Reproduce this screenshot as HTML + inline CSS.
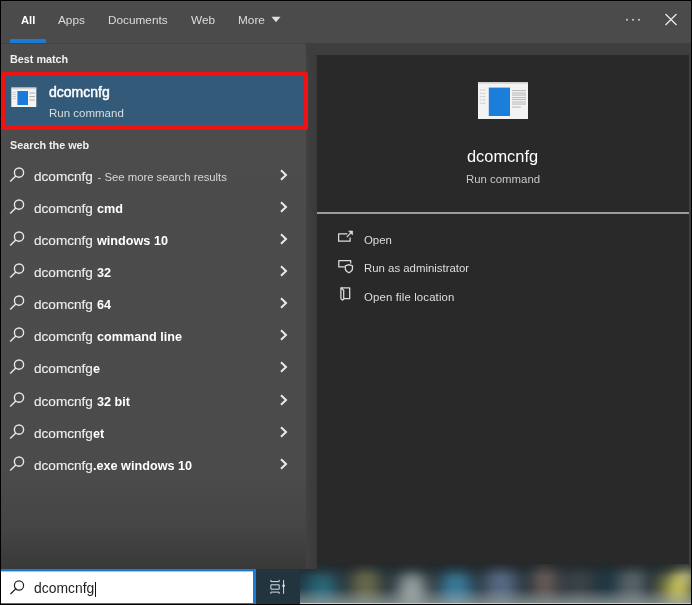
<!DOCTYPE html>
<html><head><meta charset="utf-8">
<style>
*{margin:0;padding:0;box-sizing:border-box}
html,body{width:692px;height:605px;overflow:hidden;background:#000}
body{position:relative;font-family:"Liberation Sans",sans-serif;color:#fff}
.a{position:absolute;white-space:nowrap;will-change:transform}
#top{left:1px;top:1px;width:690px;height:42px;background:#4b4b4b}
#left{left:1px;top:43px;width:305px;height:526px;background:linear-gradient(#4c4c4c,#4b4b4b 82%,#454545 92%,#39393a)}
#strip{left:306px;top:43px;width:385px;height:521px;background:#3e3e3e}
#vstrip{left:306px;top:55px;width:11px;height:514px;background:linear-gradient(90deg,#414141,#3d3d3d 5px,#3a3a3a)}
#pane{left:317px;top:55px;width:372px;height:509px;background:#292929}
.tab{top:13px;font-size:11.8px;color:#dcdcdc;line-height:14px}
.item{left:0;width:305px;height:32px}
.item .t{left:34px;top:9.5px;font-size:13.6px;line-height:16px;color:#f0f0f0;-webkit-text-stroke:0.1px #f0f0f0}
.item b{font-weight:700;color:#fff;-webkit-text-stroke:0;display:inline-block;transform:scaleX(0.93);transform-origin:0 0}
.see{font-size:11.3px;color:#d6d6d6;-webkit-text-stroke:0;padding-left:1.5px;position:relative;top:-0.5px}
.sr{position:absolute;left:8px;top:8px;fill:none;stroke:#e8e8e8;stroke-width:1.4}
.ch{position:absolute;left:278px;top:9px;fill:none;stroke:#eaeaea;stroke-width:2}
.act{left:363.5px;font-size:11.4px;color:#dedede;line-height:14px}
</style></head><body>
<div class="a" style="left:256px;top:564px;width:435px;height:40px;background:#263238;overflow:hidden">
 <svg width="435" height="40" style="position:absolute;left:0;top:0"><defs><filter id="bl" x="-50%" y="-50%" width="200%" height="200%"><feGaussianBlur stdDeviation="8 7"/></filter></defs><rect x="-20" y="-20" width="480" height="80" fill="#26333a"/><g filter="url(#bl)"><ellipse cx="47" cy="21" rx="6" ry="20" fill="#1a3a48"/><ellipse cx="67" cy="26" rx="14" ry="18" fill="#2a6a7c"/><ellipse cx="110" cy="22" rx="14" ry="20" fill="#6a6c4c"/><ellipse cx="156" cy="26" rx="14" ry="18" fill="#9aa4a2"/><ellipse cx="200" cy="26" rx="16" ry="20" fill="#3b7c9c"/><ellipse cx="245" cy="22" rx="16" ry="20" fill="#566a84"/><ellipse cx="289" cy="18" rx="12" ry="20" fill="#6a5c58"/><ellipse cx="323" cy="22" rx="12" ry="20" fill="#3e4448"/><ellipse cx="354" cy="20" rx="12" ry="20" fill="#1e3842"/><ellipse cx="377" cy="22" rx="12" ry="20" fill="#5c676e"/><ellipse cx="392" cy="22" rx="6" ry="20" fill="#263238"/><ellipse cx="422" cy="26" rx="14" ry="20" fill="#c4bc50"/><ellipse cx="432" cy="10" rx="6" ry="10" fill="#e0dca0"/></g></svg><div style="position:absolute;left:0;top:0;width:435px;height:40px;background:linear-gradient(rgba(30,30,30,0.5),rgba(30,30,30,0) 30%,rgba(160,170,170,0) 60%,rgba(170,178,178,0.6) 96%)"></div><div style="position:absolute;left:0;top:39px;width:435px;height:1px;background:#c4caca"></div>
</div>
<div class="a" id="top"></div>
<div class="a" id="left"></div>
<div class="a" style="left:1px;top:43px;width:305px;height:1px;background:#444"></div>
<div class="a" id="strip"></div>
<div class="a" id="vstrip"></div>
<div class="a" id="pane"></div>

<div class="a tab" style="left:21px;font-weight:700;color:#fff;font-size:11.2px">All</div>
<div class="a tab" style="left:58px">Apps</div>
<div class="a tab" style="left:108px">Documents</div>
<div class="a tab" style="left:191px">Web</div>
<div class="a tab" style="left:238px">More</div>
<svg class="a" style="left:271px;top:16px" width="10" height="7"><path d="M0.5 0.8 L9.5 0.8 L5 6.2 Z" fill="#e0e0e0"/></svg>
<div class="a" style="left:10px;top:39px;width:36px;height:4px;background:#1a7ad4"></div>
<svg class="a" style="left:620px;top:12px" width="60" height="18">
 <circle cx="7" cy="7.7" r="0.95" fill="#d8d8d8"/><circle cx="13" cy="7.7" r="0.95" fill="#d8d8d8"/><circle cx="19" cy="7.7" r="0.95" fill="#d8d8d8"/>
 <path d="M45.5 2 L56.5 13 M56.5 2 L45.5 13" stroke="#e8e8e8" stroke-width="1.3"/>
</svg>

<div class="a" style="left:10px;top:53px;font-size:10.8px;font-weight:700;color:#f0f0f0;line-height:13px">Best match</div>
<div class="a" style="left:1px;top:72px;width:307px;height:58px;border:4px solid #f01212;border-radius:2px;background:#345a7a"></div>
<svg class="a" style="left:11px;top:87px" width="26" height="21">
 <rect x="0.3" y="0.6" width="25" height="19.4" fill="#f4f4f4"/>
 <rect x="0.3" y="0.6" width="25" height="1.6" fill="#d4d4d4"/>
 <rect x="6.4" y="4" width="10.6" height="14" fill="#1a7cda"/>
 <rect x="18.3" y="5.5" width="5.6" height="1.1" fill="#b4b4b4"/>
 <rect x="18.3" y="9" width="5.6" height="1.1" fill="#b4b4b4"/>
 <rect x="18.3" y="12.5" width="5.6" height="1.1" fill="#b4b4b4"/>
 <g fill="#b8b8b8"><rect x="1.6" y="4.8" width="1" height="0.9"/><rect x="3.2" y="4.8" width="1.5" height="0.9"/><rect x="1.6" y="6.9" width="1" height="0.9"/><rect x="3.2" y="6.9" width="1.5" height="0.9"/><rect x="1.6" y="9.1" width="1" height="0.9"/><rect x="3.2" y="9.1" width="1.5" height="0.9"/><rect x="1.6" y="11.2" width="1" height="0.9"/><rect x="3.2" y="11.2" width="1.5" height="0.9"/></g>
</svg>
<div class="a" style="left:49px;top:84px;font-size:14px;color:#fff;line-height:16px;-webkit-text-stroke:0.45px #fff">dcomcnfg</div>
<div class="a" style="left:49px;top:106.5px;font-size:11.5px;color:#d8dde2;line-height:13px">Run command</div>

<div class="a" style="left:10px;top:139px;font-size:10.8px;font-weight:700;color:#f0f0f0;line-height:13px">Search the web</div>

<div class="a item" style="top:158.5px"><svg class="sr" width="20" height="20"><circle cx="11" cy="5.6" r="4.6"/><path d="M7.8 8.9 L2.2 14.6"/></svg><div class="a t">dcomcnfg<span class="see"> - See more search results</span></div><svg class="ch" width="12" height="14"><path d="M3 2.3 L8 7 L3 11.7"/></svg></div>
<div class="a item" style="top:190.65px"><svg class="sr" width="20" height="20"><circle cx="11" cy="5.6" r="4.6"/><path d="M7.8 8.9 L2.2 14.6"/></svg><div class="a t">dcomcnfg <b>cmd</b></div><svg class="ch" width="12" height="14"><path d="M3 2.3 L8 7 L3 11.7"/></svg></div>
<div class="a item" style="top:222.8px"><svg class="sr" width="20" height="20"><circle cx="11" cy="5.6" r="4.6"/><path d="M7.8 8.9 L2.2 14.6"/></svg><div class="a t">dcomcnfg <b>windows 10</b></div><svg class="ch" width="12" height="14"><path d="M3 2.3 L8 7 L3 11.7"/></svg></div>
<div class="a item" style="top:254.95px"><svg class="sr" width="20" height="20"><circle cx="11" cy="5.6" r="4.6"/><path d="M7.8 8.9 L2.2 14.6"/></svg><div class="a t">dcomcnfg <b>32</b></div><svg class="ch" width="12" height="14"><path d="M3 2.3 L8 7 L3 11.7"/></svg></div>
<div class="a item" style="top:287.1px"><svg class="sr" width="20" height="20"><circle cx="11" cy="5.6" r="4.6"/><path d="M7.8 8.9 L2.2 14.6"/></svg><div class="a t">dcomcnfg <b>64</b></div><svg class="ch" width="12" height="14"><path d="M3 2.3 L8 7 L3 11.7"/></svg></div>
<div class="a item" style="top:319.25px"><svg class="sr" width="20" height="20"><circle cx="11" cy="5.6" r="4.6"/><path d="M7.8 8.9 L2.2 14.6"/></svg><div class="a t">dcomcnfg <b>command line</b></div><svg class="ch" width="12" height="14"><path d="M3 2.3 L8 7 L3 11.7"/></svg></div>
<div class="a item" style="top:351.4px"><svg class="sr" width="20" height="20"><circle cx="11" cy="5.6" r="4.6"/><path d="M7.8 8.9 L2.2 14.6"/></svg><div class="a t">dcomcnfg<b>e</b></div><svg class="ch" width="12" height="14"><path d="M3 2.3 L8 7 L3 11.7"/></svg></div>
<div class="a item" style="top:383.55px"><svg class="sr" width="20" height="20"><circle cx="11" cy="5.6" r="4.6"/><path d="M7.8 8.9 L2.2 14.6"/></svg><div class="a t">dcomcnfg <b>32 bit</b></div><svg class="ch" width="12" height="14"><path d="M3 2.3 L8 7 L3 11.7"/></svg></div>
<div class="a item" style="top:415.7px"><svg class="sr" width="20" height="20"><circle cx="11" cy="5.6" r="4.6"/><path d="M7.8 8.9 L2.2 14.6"/></svg><div class="a t">dcomcnfg<b>et</b></div><svg class="ch" width="12" height="14"><path d="M3 2.3 L8 7 L3 11.7"/></svg></div>
<div class="a item" style="top:447.85px"><svg class="sr" width="20" height="20"><circle cx="11" cy="5.6" r="4.6"/><path d="M7.8 8.9 L2.2 14.6"/></svg><div class="a t">dcomcnfg<b>.exe windows 10</b></div><svg class="ch" width="12" height="14"><path d="M3 2.3 L8 7 L3 11.7"/></svg></div>

<svg class="a" style="left:478px;top:82px" width="51" height="38">
 <rect x="0" y="0" width="50" height="37" fill="#f3f3f3"/>
 <rect x="0" y="0" width="50" height="1.6" fill="#cfcfcf"/>
 <rect x="10.8" y="5.6" width="21.2" height="28.4" fill="#1b7edb"/>
 <g fill="#bdbdbd"><rect x="34" y="8" width="14" height="1.1"/><rect x="34" y="10.5" width="14" height="1.1"/><rect x="34" y="12.5" width="14" height="1.1"/><rect x="34" y="15" width="14" height="1.1"/><rect x="34" y="17" width="14" height="1.1"/><rect x="34" y="19.5" width="14" height="1.1"/><rect x="34" y="21.5" width="14" height="1.1"/><rect x="34" y="24.5" width="9" height="1.1"/></g>
 <g fill="#c8ccd0"><rect x="1.8" y="7.5" width="1.6" height="1.2"/><rect x="4.2" y="7.5" width="3.2" height="1"/><rect x="1.8" y="10.8" width="1.6" height="1.2"/><rect x="4.2" y="10.8" width="3.2" height="1"/><rect x="1.8" y="14.1" width="1.6" height="1.2"/><rect x="4.2" y="14.1" width="3.2" height="1"/><rect x="1.8" y="17.4" width="1.6" height="1.2"/><rect x="4.2" y="17.4" width="3.2" height="1"/><rect x="1.8" y="20.7" width="1.6" height="1.2"/><rect x="4.2" y="20.7" width="3.2" height="1"/></g>
</svg>
<div class="a" style="left:467px;top:147px;font-size:16.4px;color:#fff;line-height:18px">dcomcnfg</div>
<div class="a" style="left:466px;top:172px;font-size:11.4px;color:#c8c8c8;line-height:14px">Run command</div>
<div class="a" style="left:317px;top:212px;width:372px;height:2px;background:#9c9c9c"></div>

<svg class="a" style="left:336px;top:229px" width="20" height="76" fill="none" stroke="#dcdcdc" stroke-width="1.25" stroke-linejoin="round">
 <path d="M11.3 4.8 H2.6 V12.2 H14.1 V8.6"/>
 <path d="M10.8 8.2 L15 3.6"/>
 <path d="M12.6 2 L16.6 2 L16.6 6 Z" fill="#dcdcdc" stroke-width="0.6"/>
 <path d="M8.8 37.9 H2.8 V31.6 H14.7 V34.6"/>
 <path d="M9.3 36.9 L12.9 35.7 L16.5 36.9 V39.6 C16.5 41.6 14.8 42.9 12.9 43.8 C11 42.9 9.3 41.6 9.3 39.6 Z"/>
 <path d="M4.9 58.8 H13.7 V69.6 H7.7"/>
 <path d="M4.9 58.8 L7.7 61.3 V70 L6.3 71.2 L4.9 69.6 Z"/>
</svg>
<div class="a act" style="top:232.5px">Open</div>
<div class="a act" style="top:261px">Run as administrator</div>
<div class="a act" style="top:289.5px;letter-spacing:0.14px">Open file location</div>


<div class="a" style="left:256px;top:569px;width:44px;height:35px;background:#22343d"></div>
<svg class="a" style="left:268px;top:578px" width="20" height="18" fill="none" stroke="#dcdcdc" stroke-width="1">
 <path d="M2.9 1.8 V3.6 H11.2 V1.8 M2.9 6.8 H11.2 V11.2 H2.9 Z M2.9 15.8 V14.1 H11.2 V15.8 M15.6 2 V15.8"/>
 <circle cx="15.6" cy="7.7" r="1.3" fill="#e8e8e8" stroke="none"/>
</svg>

<div class="a" style="left:1px;top:569px;width:255px;height:35px;background:#fff;border:2px solid #1a7ad4;border-width:2px 3px 1px 0"></div>
<div class="a" style="left:1px;top:571px;width:252px;height:1px;background:#9cc8ee"></div>
<svg class="a" style="left:8px;top:578px" width="20" height="20" fill="none" stroke="#222" stroke-width="1.2">
 <circle cx="11" cy="7.5" r="4.6"/><path d="M7.8 10.8 L2.5 16"/>
</svg>
<div class="a" style="left:34px;top:579.5px;font-size:13.9px;color:#1e1e1e;line-height:16px">dcomcnfg</div>
<div class="a" style="left:94.5px;top:582px;width:1.2px;height:14.5px;background:#111"></div>
</body></html>
